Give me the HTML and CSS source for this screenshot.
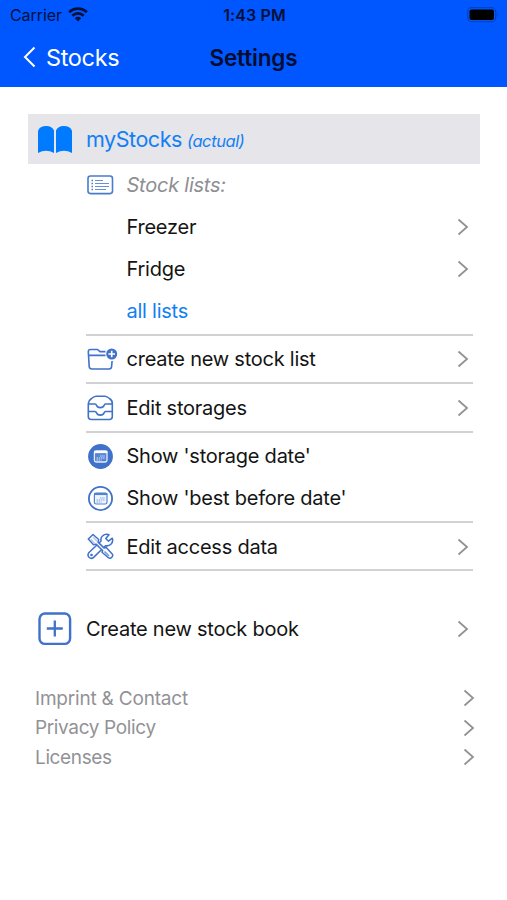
FILE: index.html
```html
<!DOCTYPE html>
<html lang="en">
<head>
<meta charset="utf-8">
<title>Settings</title>
<link rel="stylesheet" href="styles.css">
</head>
<body>
<svg class="defs" width="0" height="0">
  <symbol id="chev" viewBox="0 0 12 18"><path d="M1.500 1.500 10 9l-8.500 7.500" fill="none" stroke="#929296" stroke-width="1.800"/></symbol>
</svg>
<header class="header">
  <div class="status">
    <div class="carrier"><span class="carrier-name">Carrier</span>
      <svg width="20" height="15" viewBox="0 0 20 15" fill="none" stroke="#001038" stroke-width="2.700"><path d="M1.200 5.300a12.500 12.500 0 0 1 17.600 0M4.300 8.700a8.100 8.100 0 0 1 11.400 0"/><path d="M6.800 11.300a4.700 4.700 0 0 1 6.400 0L10 14.600z" fill="#001038" stroke="none"/></svg>
    </div>
    <div class="clock"><span>1:43 PM</span></div>
    <svg class="battery" width="32" height="16" viewBox="0 0 32 16"><rect x=".7" y=".7" width="28" height="14" rx="4" fill="none" stroke="#0543bd" stroke-width="1.300"/><rect x="2.500" y="2.500" width="24.500" height="10.400" rx="2" fill="#000"/><path d="M30.300 5.500q2 2.300 0 4.600z" fill="#0543bd"/></svg>
  </div>
  <nav class="nav">
    <a class="back"><svg width="13" height="22" viewBox="0 0 13 22"><path d="M11.500 1.500 2 11l9.500 9.500" fill="none" stroke="#fff" stroke-width="2"/></svg><span>Stocks</span></a>
    <h1><span>Settings</span></h1>
  </nav>
</header>
<main>
  <div class="book">
    <svg width="35" height="29" viewBox="0 0 35 29" fill="#007aff"><path d="M0 28V6Q1.500 1 8.500 1q5.500 0 7.500 4.500V28Q8 23.500 0 28zM18 28V5.500Q20 1 25.500 1q7 0 8.500 5v22q-8-4.500-16 0z"/></svg>
    <span class="name">myStocks</span><em>(actual)</em>
  </div>
  <section class="group lists">
    <div class="row"><span class="ico"><svg width="27" height="20" viewBox="0 0 27 20" fill="none" stroke="#4a7ccc"><rect x="1" y="1" width="24.500" height="17.600" rx="2.500" stroke-width="1.600"/><path d="M8 5.500h8M8 8.500h14M8 11.500h14M8 14.500h11" stroke-width="1.200" stroke="#6690d6"/><path d="M4.500 5.500H6M4.500 8.500H6M4.500 11.500H6M4.500 14.500H6" stroke-width="1.500"/></svg></span><span class="label muted">Stock lists:</span></div>
    <div class="row"><span class="ico"></span><span class="label">Freezer</span><svg class="chev"><use href="#chev"/></svg></div>
    <div class="row"><span class="ico"></span><span class="label">Fridge</span><svg class="chev"><use href="#chev"/></svg></div>
    <div class="row"><span class="ico"></span><span class="label link">all lists</span></div>
  </section>
  <section class="group single">
    <div class="row"><span class="ico"><svg width="32" height="24" viewBox="0 0 32 24" fill="none" stroke="#3f72c8" stroke-width="1.600"><path d="M18.500 4.600H13L10.500 2.500H3.500q-2.200 0-2.200 2.200L2.200 19.500q.2 2.500 2.800 2.500h17q2.400 0 2.600-2.500l.5-5.500M1.500 8.400h17"/><circle cx="24.700" cy="7" r="5.500" fill="#3f72c8" stroke="none"/><path d="M24.700 3.700v6.600M21.400 7H28" stroke="#fff" stroke-width="1.600"/></svg></span><span class="label">create new stock list</span><svg class="chev"><use href="#chev"/></svg></div>
  </section>
  <section class="group single tall">
    <div class="row"><span class="ico"><svg width="27" height="26" viewBox="0 0 27 26" fill="none" stroke="#3f72c8" stroke-width="1.600" stroke-linejoin="round"><path d="M1.300 8.500Q1.500 5.500 4.500 3.500 7 1.200 9 1.200h9q2 0 4.500 2.300 3 2 2.800 5v13q0 3-3 3h-18q-3 0-3-3zM1.300 9h6.500q1.400 0 1.800 1.600.6 2 3.700 2t3.700-2Q17.400 9 18.800 9h6.500M1.300 16.500h6.500q1.400 0 1.800 1.600.6 2 3.700 2t3.700-2q.4-1.600 1.800-1.600h6.500"/></svg></span><span class="label">Edit storages</span><svg class="chev"><use href="#chev"/></svg></div>
  </section>
  <section class="group dates">
    <div class="row"><span class="ico"><svg width="27" height="27" viewBox="0 0 27 27"><circle cx="13.500" cy="13.500" r="12.400" fill="#3f72c8"/><rect x="7.400" y="8" width="12.600" height="11" rx="1.800" fill="#5685d2" stroke="#e4ecfb" stroke-width="1.300"/><path d="M7 9h13.400" stroke="#fff" stroke-width="2.300"/><path d="M13 13h5M9.500 15h8.500M9.500 17h5" stroke="#dce7fa" stroke-width="1.200" stroke-dasharray="1.500 .7"/></svg></span><span class="label">Show 'storage date'</span></div>
    <div class="row"><span class="ico"><svg width="27" height="27" viewBox="0 0 27 27"><circle cx="13.500" cy="13.500" r="11.600" fill="#fff" stroke="#3f72c8" stroke-width="1.800"/><rect x="7.400" y="8" width="12.600" height="11" rx="1.800" fill="#eff5ff" stroke="#5383d0" stroke-width="1.200"/><path d="M7 9h13.400" stroke="#5383d0" stroke-width="2.100"/><path d="M13 13h5M9.500 15h8.500M9.500 17h5" stroke="#7ba3e5" stroke-width="1.100" stroke-dasharray="1.500 .7"/></svg></span><span class="label">Show 'best before date'</span></div>
  </section>
  <section class="group single access">
    <div class="row"><span class="ico"><svg width="27" height="27" viewBox="0 0 27 27" fill="#fff" stroke="#3f72c8" stroke-width="1.500" stroke-linejoin="round"><path d="M25.300 5.200 21.500 8.200l-2.700-2.700L22 1.700q-4-1.100-6.500 1.300-2.200 2-1.400 5L2 19.500q-2 2.400 0 4.700 2.300 2.300 4.600.2L18.500 12.700q3.200.7 5.400-1.400 2.600-2.500 1.400-6.100z"/><circle cx="4.500" cy="22" r=".6"/><path d="M1.300 6 6 1.500l5.700 5-.7 2.600 6.200 6 2-.5 6 6.300q1.200 1.700-.4 3.400t-3.400.4L15 19.300l.7-1.800-6.700-6.400-2.500.7z"/><path d="m3.700 6.300 4 4.200M6 4l4 4.200" stroke="#b9c9ee" stroke-width="1.500"/><path d="m17.500 18.500 4.500 4.600" stroke="#6e97dc"/></svg></span><span class="label">Edit access data</span><svg class="chev"><use href="#chev"/></svg></div>
  </section>
  <div class="new-book">
    <svg width="34" height="34" viewBox="0 0 34 34" fill="none" stroke="#3f72c8"><rect x="1.500" y="1.500" width="30.600" height="30.400" rx="5.500" stroke-width="2.400"/><path d="M16.800 8.500v16M8.800 16.500h16" stroke-width="2.300"/></svg>
    <span class="label">Create new stock book</span><svg class="chev"><use href="#chev"/></svg>
  </div>
  <footer class="footer">
    <div><span class="wide">Imprint &amp; Contact</span><svg class="chev"><use href="#chev"/></svg></div>
    <div><span>Privacy Policy</span><svg class="chev"><use href="#chev"/></svg></div>
    <div><span>Licenses</span><svg class="chev"><use href="#chev"/></svg></div>
  </footer>
</main>
</body>
</html>
```
FILE: styles.css
```css
* { box-sizing: border-box; }
body { margin: 0; background: #fff; color: #141414; font-family: Inter, "Liberation Sans", sans-serif; font-size: 20px; }
svg { display: block; flex: none; }
.defs { position: absolute; }
.header { height: 87px; background: #0057ff; color: #001038; }
.status { height: 29px; display: grid; grid-template-columns: 1fr auto 1fr; align-items: center; padding: 0 8px 0 10px; font-size: 16px; }
.carrier { display: flex; align-items: center; gap: 6px; }
.carrier-name { letter-spacing: -.08px; }
.clock { font-weight: 600; letter-spacing: .1px; }
.battery { justify-self: end; }
.nav { height: 56px; display: grid; grid-template-columns: 1fr auto 1fr; align-items: center; padding: 0 23px; }
.back { display: flex; align-items: center; gap: 10px; color: #fff; font-size: 23.500px; letter-spacing: -.35px; }
h1 { margin: 0; font-size: 22.500px; font-weight: 600; color: #000d30; letter-spacing: -.15px; }
main { padding: 27px 27px 0 28px; }
.book { height: 50px; background: #e5e5ea; display: flex; align-items: center; padding-left: 10px; color: #127ff5; }
.name { font-size: 21.500px; margin-left: 13px; letter-spacing: -.45px; }
.book em { font-size: 16.500px; margin: 3px 0 0 5px; letter-spacing: -.4px; }
.group { margin: 0 7px 0 58px; border-bottom: 2px solid #d2d2d4; }
.lists { padding-bottom: 2px; }
.row { height: 42px; display: flex; align-items: center; padding-right: 4px; }
.single .row { height: 46px; }
.tall .row { height: 47px; }
.dates { padding: 2px 0; }
.access .row { padding-top: 1px; }
.ico { width: 40.500px; padding-left: 1px; flex: none; }
.label { white-space: nowrap; letter-spacing: -.24px; }
.muted { color: #8e8e93; font-style: italic; }
.link { color: #127ff5; }
.chev { width: 12px; height: 18px; margin-left: auto; }
.new-book { height: 50px; margin-top: 33px; display: flex; align-items: center; padding: 0 11px 0 10px; }
.new-book .label { margin-left: 14px; }
.footer { margin-top: 29.500px; padding: 0 5px 0 7px; color: #929296; font-size: 19px; letter-spacing: -.36px; }
.footer .wide { letter-spacing: -.2px; }
.footer div { height: 29.600px; display: flex; align-items: center; }
```
